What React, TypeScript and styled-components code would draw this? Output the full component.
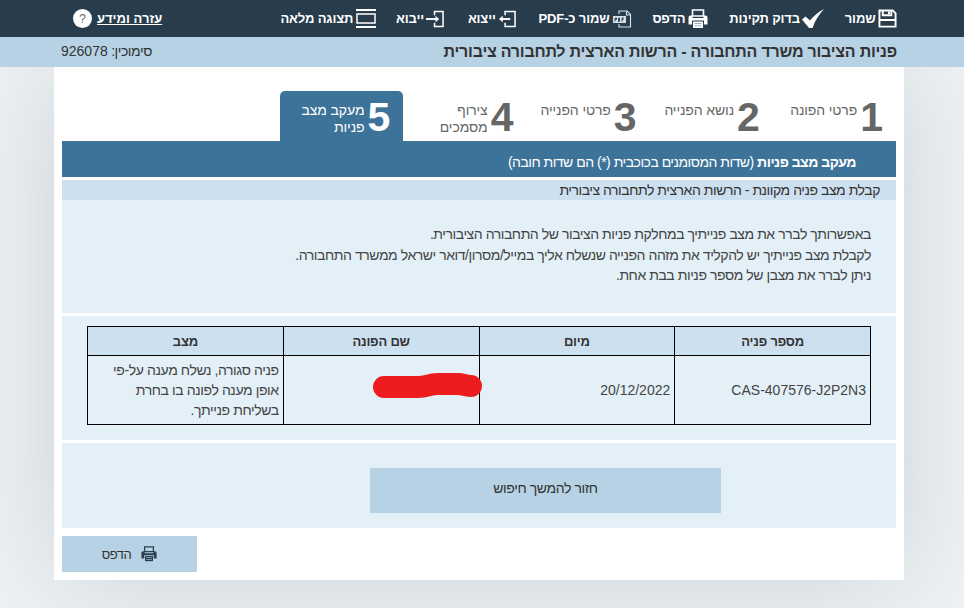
import React from "react";
import styled, { createGlobalStyle } from "styled-components";

const Global = createGlobalStyle`
  html, body {
    margin: 0;
    padding: 0;
    height: 100%;
  }
  body {
    font-family: "Liberation Sans", Arial, sans-serif;
    background: #eef1f3;
    overflow: hidden;
  }
`;

const Root = styled.div`
  width: 964px;
  height: 608px;
  display: flex;
  flex-direction: column;
  overflow: hidden;
  background: #f0f3f5;
`;

const Toolbar = styled.div`
  height: 37px;
  background: #283c4c;
  display: flex;
  align-items: center;
  gap: 20.4px;
  padding: 0 67px 0 73px;
  box-sizing: border-box;
  position: relative;
  z-index: 1;
`;

const ToolItem = styled.a<{ $extra?: number }>`
  display: flex;
  align-items: center;
  gap: 2.5px;
  padding-left: ${(p) => p.$extra ?? 0}px;
  color: #fff;
  font-size: 13px;
  font-weight: bold;
  letter-spacing: -0.15px;
  white-space: nowrap;
`;

const HelpItem = styled(ToolItem)`
  margin-right: auto;
  gap: 5px;
  letter-spacing: 0;
  text-decoration: underline;
`;

const HelpDot = styled.span`
  width: 19px;
  height: 19px;
  border-radius: 50%;
  background: #fff;
  color: #666;
  font-size: 12px;
  font-weight: normal;
  display: flex;
  align-items: center;
  justify-content: center;
`;

const TitleBar = styled.div`
  height: 30px;
  background: #b7d2e5;
  display: flex;
  align-items: center;
  justify-content: space-between;
  padding: 0 67px 0 61px;
  position: relative;
  z-index: 1;
`;

const Title = styled.h1`
  margin: 0;
  font-size: 16px;
  font-weight: bold;
  letter-spacing: -0.23px;
  color: #333;
`;

const Simochin = styled.span`
  font-size: 14px;
  letter-spacing: -0.45px;
  color: #333;
  margin-top: -3px;
`;

const SimochinNum = styled.span`
  letter-spacing: 0;
`;

const Page = styled.main`
  width: 834px;
  height: 513px;
  margin: 0 60px 0 54px;
  padding: 0 8px;
  background: #fff;
  box-shadow: 0 0 110px rgba(110, 130, 145, 0.3);
  display: flex;
  flex-direction: column;
`;

const Steps = styled.div`
  display: flex;
  height: 50px;
  margin-top: 24px;
`;

const Step = styled.div<{ $active?: boolean }>`
  width: 123.2px;
  height: 50px;
  box-sizing: border-box;
  padding: 11px 13px 0 0;
  display: flex;
  gap: 3px;
  border-radius: 5px 5px 0 0;
  background: ${(p) => (p.$active ? "#3d7399" : "transparent")};
  color: ${(p) => (p.$active ? "#fff" : "#666")};
`;

const StepNum = styled.span`
  font-size: 41px;
  font-weight: bold;
  line-height: 31px;
`;

const StepText = styled.span`
  font-size: 14px;
  line-height: 17px;
  letter-spacing: -0.1px;
  width: 80px;
`;

const FormHead = styled.div`
  height: 36px;
  box-sizing: border-box;
  background: #3d7399;
  color: #fff;
  font-size: 14px;
  letter-spacing: -0.5px;
  display: flex;
  align-items: center;
  padding: 5px 40px 0 0;
`;

const SubHead = styled.div`
  height: 20px;
  margin-top: 3px;
  background: #cde0ef;
  color: #333;
  font-size: 14px;
  letter-spacing: -0.46px;
  line-height: 20px;
  padding-right: 16px;
`;

const InfoPanel = styled.div`
  height: 113px;
  box-sizing: border-box;
  background: #e3f0f8;
  color: #444;
  font-size: 14px;
  letter-spacing: -0.44px;
  line-height: 20.5px;
  padding: 24px 25px 0 0;
`;

const Panel = styled.div<{ $h: number }>`
  height: ${(p) => p.$h}px;
  box-sizing: border-box;
  margin-top: 3px;
  background: #e3f0f8;
`;

const TablePanel = styled(Panel)`
  padding: 10px 25px 0;
`;

const Table = styled.table`
  width: 784px;
  table-layout: fixed;
  border-collapse: collapse;
  font-size: 14px;
  color: #444;
  th, td {
    border: 1px solid #000;
  }
  th {
    height: 28px;
    padding: 0;
    background: #cde0ef;
    color: #333;
    font-size: 13px;
    letter-spacing: -0.2px;
  }
  td {
    height: 68px;
    padding: 0 4px;
    line-height: 20px;
    text-align: right;
  }
`;

const StatusText = styled.span`
  letter-spacing: -0.4px;
`;

const Redaction = styled.svg`
  display: block;
  margin: -9px -8px 0 auto;
`;

const ButtonPanel = styled(Panel)`
  padding: 25px 175px 0 0;
`;

const BackButton = styled.button`
  display: block;
  width: 351px;
  height: 45px;
  padding: 0 0 6px;
  border: 0;
  background: #b7d2e5;
  color: #333;
  font-family: inherit;
  font-size: 14px;
  letter-spacing: -0.4px;
`;

const PrintButton = styled.button`
  align-self: flex-end;
  width: 135px;
  height: 36px;
  margin-top: 8px;
  border: 0;
  background: #b7d2e5;
  color: #333;
  font-family: inherit;
  font-size: 13px;
  letter-spacing: -0.45px;
  display: flex;
  align-items: center;
  justify-content: center;
  gap: 10px;
`;

const SaveIcon = () => (
  <svg width="19" height="19" viewBox="0 0 20 20" fill="none" stroke="#fff" strokeWidth="2">
    <path d="M1.500 1.500h14l3 3v14h-17z" />
    <path d="M5 1.500v5h9v-5M1.500 11.500h17" />
    <path d="M10.500 2.500h2v3h-2z" fill="#fff" stroke="none" />
  </svg>
);

const CheckIcon = () => (
  <svg width="22" height="19" viewBox="0 0 22 19" fill="#fff">
    <path d="M0 10.500L3.500 7.500 8 11.500C11 7.500 16 3 22 0 17.500 5 13 11 10.500 19H7z" />
  </svg>
);

const PrinterIcon = ({ color = "#fff", size = 20 }: { color?: string; size?: number }) => (
  <svg width={size} height={size} viewBox="0 0 20 20">
    <path d="M4.500 1h11v6h-11z" fill="none" stroke={color} strokeWidth="1.6" />
    <path d="M2.500 6.500h2V9h11V6.500h2A2 2 0 0 1 19.500 8.500v7h-3.500v-4H4v4H.5v-7a2 2 0 0 1 2-2z" fill={color} />
    <path d="M5 12.500h10v6.500H5z" fill={color} />
    <path d="M6.500 14h7v1h-7zM6.500 16.200h7v1h-7z" fill="#9fb4c4" />
  </svg>
);

const PdfIcon = () => (
  <svg width="20" height="18" viewBox="0 0 20 18" fill="none" stroke="#dfe5ea" strokeWidth="1.1">
    <path d="M7 4V1h8l3.500 3.500V17H7v-3" />
    <path d="M14.500 1.500V5h4" />
    <rect x="1" y="6" width="13" height="7" fill="#d8dfe5" stroke="none" />
    <path d="M3 8v3.500M3 8h1.500v1.500H3M6.500 8v3.500h1V8zM10 8v3.500M10 8h2M10 9.500h1.500" stroke="#283c4c" strokeWidth="0.9" />
  </svg>
);

const ExportIcon = () => (
  <svg width="18" height="18" viewBox="0 0 19 18" fill="none" stroke="#fff" strokeWidth="1.6">
    <path d="M7.500 5V1H18v16H7.500v-4" />
    <path d="M13 9H2" strokeWidth="2" />
    <path d="M5 5.500L1 9l4 3.500z" fill="#fff" stroke="none" />
  </svg>
);

const ImportIcon = () => (
  <svg width="18" height="18" viewBox="0 0 19 18" fill="none" stroke="#fff" strokeWidth="1.6">
    <path d="M9 5V1h9v16H9v-4" />
    <path d="M0 9h11" strokeWidth="2" />
    <path d="M10 5.500L14 9l-4 3.500z" fill="#fff" stroke="none" />
  </svg>
);

const FullViewIcon = () => (
  <svg width="20" height="19" viewBox="0 0 20 19" fill="none" stroke="#fff">
    <path d="M0 1h20M0 18h20" strokeWidth="2" />
    <rect x="1" y="5" width="18" height="9" strokeWidth="1.500" />
  </svg>
);

const App = (): JSX.Element => {
  return (
    <Root dir="rtl">
      <Global />
      <Toolbar>
        <ToolItem><SaveIcon />שמור</ToolItem>
        <ToolItem $extra={1}><CheckIcon />בדוק תקינות</ToolItem>
        <ToolItem><PrinterIcon />הדפס</ToolItem>
        <ToolItem $extra={2}><PdfIcon />שמור כ-PDF</ToolItem>
        <ToolItem $extra={3}><ExportIcon />ייצוא</ToolItem>
        <ToolItem><ImportIcon />ייבוא</ToolItem>
        <ToolItem><FullViewIcon />תצוגה מלאה</ToolItem>
        <HelpItem>עזרה ומידע<HelpDot>?</HelpDot></HelpItem>
      </Toolbar>
      <TitleBar>
        <Title>פניות הציבור משרד התחבורה - הרשות הארצית לתחבורה ציבורית</Title>
        <Simochin>סימוכין: <SimochinNum>926078</SimochinNum></Simochin>
      </TitleBar>
      <Page>
        <Steps>
          <Step><StepNum>1</StepNum><StepText>פרטי הפונה</StepText></Step>
          <Step><StepNum>2</StepNum><StepText>נושא הפנייה</StepText></Step>
          <Step><StepNum>3</StepNum><StepText>פרטי הפנייה</StepText></Step>
          <Step><StepNum>4</StepNum><StepText>צירוף מסמכים</StepText></Step>
          <Step $active><StepNum>5</StepNum><StepText>מעקב מצב פניות</StepText></Step>
        </Steps>
        <FormHead>
          <span><b>מעקב מצב פניות</b> (שדות המסומנים בכוכבית (*) הם שדות חובה)</span>
        </FormHead>
        <SubHead>קבלת מצב פניה מקוונת - הרשות הארצית לתחבורה ציבורית</SubHead>
        <InfoPanel>
          באפשרותך לברר את מצב פנייתיך במחלקת פניות הציבור של התחבורה הציבורית.
          <br />
          לקבלת מצב פנייתיך יש להקליד את מזהה הפנייה שנשלח אליך במייל/מסרון/דואר ישראל ממשרד התחבורה.
          <br />
          ניתן לברר את מצבן של מספר פניות בבת אחת.
        </InfoPanel>
        <TablePanel $h={124}>
          <Table>
            <thead>
              <tr>
                <th>מספר פניה</th>
                <th>מיום</th>
                <th>שם הפונה</th>
                <th>מצב</th>
              </tr>
            </thead>
            <tbody>
              <tr>
                <td>CAS-407576-J2P2N3</td>
                <td>20/12/2022</td>
                <td>
                  <Redaction width="110" height="25" viewBox="0 0 110 25">
                    <path
                      d="M11 14 H45 C55 14 55 11 65 11 H85 C90 11 92 13 98 13"
                      fill="none"
                      stroke="#ec1c1f"
                      strokeWidth="22"
                      strokeLinecap="round"
                    />
                  </Redaction>
                </td>
                <td><StatusText>פניה סגורה, נשלח מענה על-פי אופן מענה לפונה בו בחרת בשליחת פנייתך.</StatusText></td>
              </tr>
            </tbody>
          </Table>
        </TablePanel>
        <ButtonPanel $h={85}>
          <BackButton>חזור להמשך חיפוש</BackButton>
        </ButtonPanel>
        <PrintButton><PrinterIcon color="#2c3e50" size={16} />הדפס</PrintButton>
      </Page>
    </Root>
  );
};

export default App;
